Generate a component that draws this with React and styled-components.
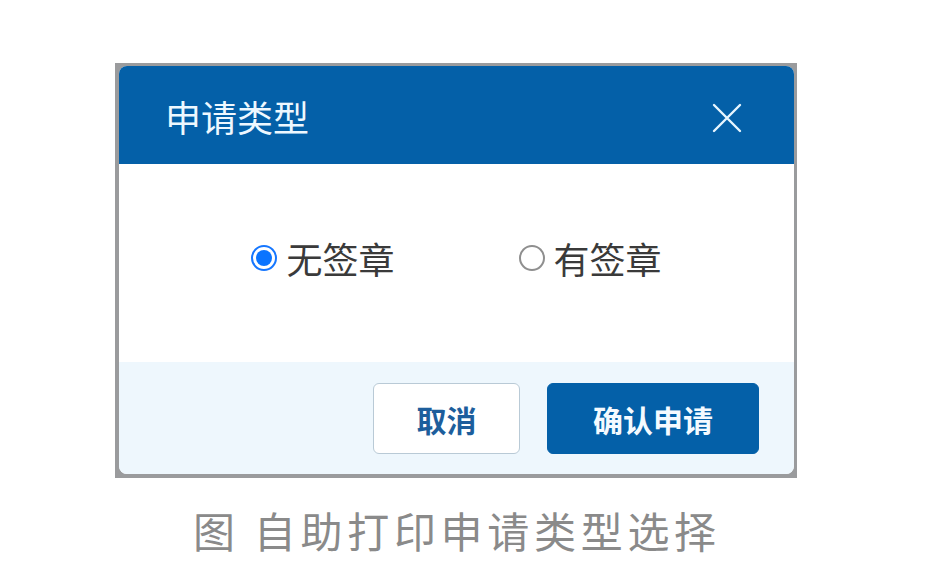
import React from 'react';
import styled, { createGlobalStyle } from 'styled-components';

const Global = createGlobalStyle`
  html, body {
    margin: 0;
    padding: 0;
    background: #ffffff;
  }
  body {
    font-family: "Noto Sans CJK SC", "Noto Sans", sans-serif;
  }
`;

const Page = styled.div`
  width: 933px;
  height: 566px;
  padding: 63px 0 0 115px;
  box-sizing: border-box;
  display: flex;
  flex-direction: column;
`;

const Frame = styled.div`
  width: 682px;
  height: 415px;
  box-sizing: border-box;
  padding: 3px 3px 4px 4px;
  background: #9a9b9d;
  display: flex;
`;

const Dialog = styled.div`
  flex: 1;
  border-radius: 8px;
  overflow: hidden;
  display: flex;
  flex-direction: column;
  background: #ffffff;
`;

const Header = styled.div`
  height: 98px;
  flex: none;
  background: #0460a8;
  display: flex;
  align-items: center;
  justify-content: space-between;
  padding: 0 52px 0 46px;
`;

const Title = styled.div`
  color: #eef8ff;
  font-size: 36px;
  line-height: 1;
  margin-top: 2px;
`;

const Close = styled.button`
  border: 0;
  padding: 0;
  background: none;
  width: 30px;
  height: 30px;
  display: flex;
  margin-top: 6px;
`;

const Body = styled.div`
  height: 198px;
  flex: none;
  display: flex;
  align-items: center;
  justify-content: center;
  gap: 124px;
  padding-bottom: 10px;
  box-sizing: border-box;
`;

const Option = styled.label`
  display: flex;
  align-items: center;
  gap: 9px;
  font-size: 36px;
  line-height: 1;
  color: #3a3a3a;
`;

const Radio = styled.span`
  width: 26px;
  height: 26px;
  box-sizing: border-box;
  border-radius: 50%;
  border: ${p => (p.checked ? '2px solid #1677ff' : '2px solid #8f8f8f')};
  display: flex;
  align-items: center;
  justify-content: center;
  &::after {
    content: '';
    width: 16px;
    height: 16px;
    border-radius: 50%;
    background: ${p => (p.checked ? '#0a74ff' : 'transparent')};
  }
`;

const Footer = styled.div`
  flex: 1;
  background: #eef7fd;
  display: flex;
  justify-content: flex-end;
  align-items: flex-start;
  gap: 27px;
  padding: 21px 35px 0 0;
`;

const Button = styled.button`
  width: ${p => p.w}px;
  height: 71px;
  box-sizing: border-box;
  border-radius: 6px;
  font-family: "Noto Sans CJK SC", sans-serif;
  font-size: 30px;
  font-weight: 600;
  border: 1px solid ${p => (p.primary ? '#0460a8' : '#b9cad6')};
  background: ${p => (p.primary ? '#0460a8' : '#ffffff')};
  color: ${p => (p.primary ? '#f4faff' : '#1d5e9c')};
  padding: 0;
`;

const Caption = styled.div`
  margin-top: 31px;
  padding-left: 78px;
  font-size: 42px;
  letter-spacing: 4.7px;
  line-height: 1;
  color: #8a8a8a;
  white-space: pre;
`;

export default function App() {
  return (
    <>
      <Global />
      <Page>
        <Frame>
          <Dialog>
            <Header>
              <Title>申请类型</Title>
              <Close aria-label="close">
                <svg width="30" height="30" viewBox="0 0 30 30">
                  <path d="M2 2 L28 28 M28 2 L2 28" stroke="#e8f6ff" strokeWidth="2.4" strokeLinecap="round" />
                </svg>
              </Close>
            </Header>
            <Body>
              <Option>
                <Radio checked />
                无签章
              </Option>
              <Option>
                <Radio />
                有签章
              </Option>
            </Body>
            <Footer>
              <Button w={147}>取消</Button>
              <Button w={212} primary>确认申请</Button>
            </Footer>
          </Dialog>
        </Frame>
        <Caption>图 自助打印申请类型选择</Caption>
      </Page>
    </>
  );
}
